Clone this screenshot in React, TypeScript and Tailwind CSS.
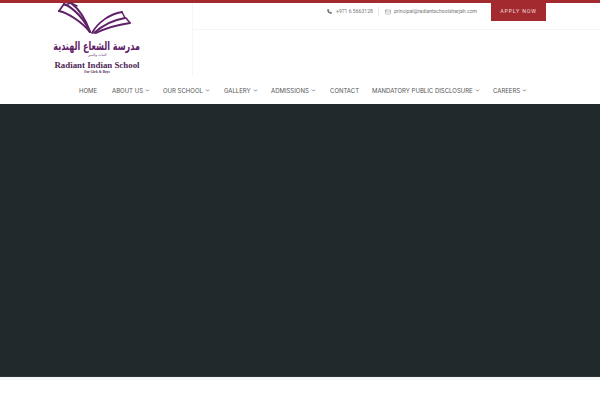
import { Phone, Mail, ChevronDown } from "lucide-react";

const nav: [string, boolean, string][] = [
  ["HOME", false, "w-[33px]"],
  ["ABOUT US", true, "w-[51px]"],
  ["OUR SCHOOL", true, "w-[61px]"],
  ["GALLERY", true, "w-[47px]"],
  ["ADMISSIONS", true, "w-[59px]"],
  ["CONTACT", false, "w-[42px]"],
  ["MANDATORY PUBLIC DISCLOSURE", true, "w-[121px]"],
  ["CAREERS", true, "w-[49px]"],
];

function Logo() {
  return (
    <div className="flex flex-col items-center w-[90px] leading-none -mt-[3px]">
      <svg viewBox="0 0 90 37" className="w-[90px] h-[37px] shrink-0" fill="none" stroke="#5f2167" strokeLinecap="round" strokeLinejoin="round">
        <path d="M7 11 C16 13 30 22 38 32" strokeWidth="2.1" />
        <path d="M7 11 L12 4" strokeWidth="1.8" />
        <path d="M12 4 C22 8 33 20 38 32" strokeWidth="2.1" />
        <path d="M13 5 L19 3" strokeWidth="1.4" />
        <path d="M19 3 C27 9 34 20 38 32" strokeWidth="2.1" />
        <path d="M19 3 L25 6" strokeWidth="1.4" />
        <path d="M40 33 C46 22 58 14 70 12" strokeWidth="1.8" />
        <path d="M42 33 C50 26 60 20 73 18" strokeWidth="1.8" />
        <path d="M44 33 C52 29 64 25 78 23" strokeWidth="1.8" />
        <path d="M70 12 L73 18" strokeWidth="1.5" />
        <path d="M74 18 L78 23" strokeWidth="1.5" />
      </svg>
      <div className="w-full flex justify-center mt-[3px]">
        <div dir="rtl" className="text-[12px] font-bold text-[#5f2167] font-['DejaVu_Sans',sans-serif] whitespace-nowrap scale-x-[0.67]">مدرسة الشعاع الهندية</div>
      </div>
      <div dir="rtl" className="mt-[2px] text-[3.5px] text-[#5f2167] font-['DejaVu_Sans',sans-serif]">البنات والبنين</div>
      <div className="mt-[3px] text-[8.85px] font-bold text-[#4e1f55] font-['Liberation_Serif',serif] whitespace-nowrap">Radiant Indian School</div>
      <div className="mt-[2px] text-[3.5px] font-bold text-[#4e1f55] font-['Liberation_Serif',serif] whitespace-nowrap">For Girls &amp; Boys</div>
    </div>
  );
}

export default function App() {
  return (
    <div className="w-[600px] h-[400px] overflow-hidden bg-white flex flex-col font-['Inter',sans-serif]">
      <div className="h-[3px] bg-[#a32b30] shrink-0" />
      <header className="h-[101px] shrink-0 flex flex-col">
        <div className="flex h-[73px] shrink-0">
          <div className="w-[193px] shrink-0 border-r border-[#f5f5f5] pl-[52px]">
            <Logo />
          </div>
          <div className="flex-1">
            <div className="h-[27px] border-b border-[#f5f5f5] flex items-start pl-[134px]">
              <div className="flex items-center h-[17px] text-[5.1px] text-[#777] font-['Roboto',sans-serif] whitespace-nowrap">
                <Phone className="w-[5px] h-[5px] fill-[#666] text-[#666]" />
                <span className="ml-[4px] w-[38px]">+971 6 5663128</span>
                <span className="ml-[4px] mr-[6px] w-px h-[9px] bg-[#e6e6e6]" />
                <Mail className="w-[6px] h-[6px] text-[#888]" />
                <span className="ml-[3px] w-[85px]">principal@radiantschoolsharjah.com</span>
              </div>
              <div className="ml-[12px] w-[55px] h-[18px] bg-[#a32b30] text-[#f3dcdc] text-[5.3px] tracking-[0.16em] flex items-center justify-center font-['Roboto',sans-serif]">APPLY NOW</div>
            </div>
          </div>
        </div>
        <nav className="flex-1 flex items-start pl-[79px] pt-[10px] text-[6px] text-[#555] font-['Inter',sans-serif]">
          {nav.map(([label, caret, w]) => (
            <div key={label} className={`${w} flex items-center whitespace-nowrap h-[9px]`}>
              <span>{label}</span>
              {caret && <ChevronDown className="w-[5px] h-[5px] ml-[2px] text-[#444]" strokeWidth={3} />}
            </div>
          ))}
        </nav>
      </header>
      <section className="h-[273px] shrink-0 bg-[#20292c] border-b border-[#2e3336]" />
      <div className="h-[3px] bg-[#f4f7fa] shrink-0" />
      <div className="flex-1 bg-white" />
    </div>
  );
}
